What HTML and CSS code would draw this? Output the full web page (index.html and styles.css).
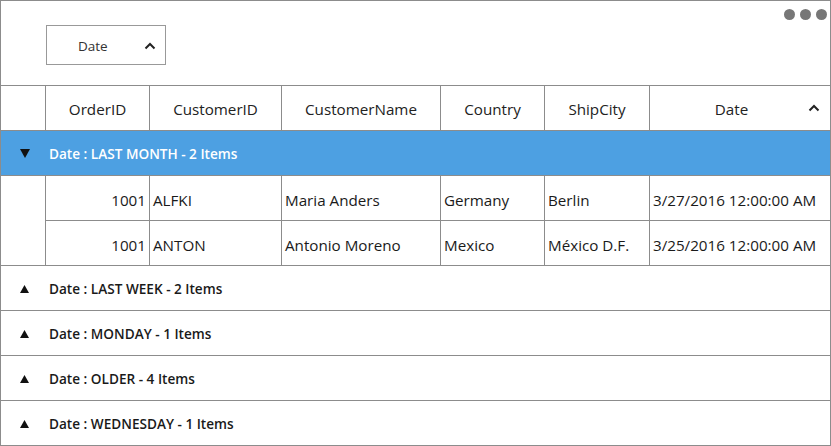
FILE: index.html
```html
<!DOCTYPE html>
<html>
<head>
<meta charset="utf-8">
<link rel="stylesheet" href="styles.css">
</head>
<body>
<div class="grid">
  <div class="toppanel">
    <div class="groupbtn">
      <span class="groupbtn-text">Date</span>
      <svg class="caret" width="12" height="8" viewBox="0 0 12 8"><polyline points="1.5,6.5 6,2 10.5,6.5" fill="none" stroke="#222" stroke-width="2"/></svg>
    </div>
    <div class="dots"><span class="dot"></span><span class="dot"></span><span class="dot"></span></div>
  </div>

  <div class="row header">
    <div class="cell indent"></div>
    <div class="cell hcell">OrderID</div>
    <div class="cell hcell">CustomerID</div>
    <div class="cell hcell">CustomerName</div>
    <div class="cell hcell">Country</div>
    <div class="cell hcell">ShipCity</div>
    <div class="cell hcell last datehead">
      <span>Date</span>
      <svg class="sortcaret" width="12" height="8" viewBox="0 0 12 8"><polyline points="1.5,6.5 6,2 10.5,6.5" fill="none" stroke="#222" stroke-width="2"/></svg>
    </div>
  </div>

  <div class="caption expanded">
    <svg class="tri" width="10" height="9" viewBox="0 0 10 9"><polygon points="0,0 10,0 5,9" fill="#111"/></svg>
    <span>Date : LAST MONTH - 2 Items</span>
  </div>

  <div class="groupbody">
    <div class="indentcol"></div>
    <div class="rows">
      <div class="row data">
        <div class="cell num">1001</div>
        <div class="cell">ALFKI</div>
        <div class="cell">Maria Anders</div>
        <div class="cell">Germany</div>
        <div class="cell">Berlin</div>
        <div class="cell last">3/27/2016 12:00:00 AM</div>
      </div>
      <div class="row data lastrow">
        <div class="cell num">1001</div>
        <div class="cell">ANTON</div>
        <div class="cell">Antonio Moreno</div>
        <div class="cell">Mexico</div>
        <div class="cell">México D.F.</div>
        <div class="cell last">3/25/2016 12:00:00 AM</div>
      </div>
    </div>
  </div>

  <div class="caption">
    <svg class="tri up" width="9" height="8" viewBox="0 0 9 8"><polygon points="4.5,0 9,8 0,8" fill="#111"/></svg>
    <span>Date : LAST WEEK - 2 Items</span>
  </div>
  <div class="caption">
    <svg class="tri up" width="9" height="8" viewBox="0 0 9 8"><polygon points="4.5,0 9,8 0,8" fill="#111"/></svg>
    <span>Date : MONDAY - 1 Items</span>
  </div>
  <div class="caption">
    <svg class="tri up" width="9" height="8" viewBox="0 0 9 8"><polygon points="4.5,0 9,8 0,8" fill="#111"/></svg>
    <span>Date : OLDER - 4 Items</span>
  </div>
  <div class="caption">
    <svg class="tri up" width="9" height="8" viewBox="0 0 9 8"><polygon points="4.5,0 9,8 0,8" fill="#111"/></svg>
    <span>Date : WEDNESDAY - 1 Items</span>
  </div>
</div>
</body>
</html>
```

FILE: styles.css
```css
* { box-sizing: border-box; }
html, body { margin: 0; padding: 0; background: #fff; }
body {
  font-family: "Open Sans", "Noto Sans", sans-serif;
  color: #1a1a1a;
}
.grid {
  width: 831px;
  height: 446px;
  border: 1px solid #8c8c8c;
  border-bottom: none;
  display: flex;
  flex-direction: column;
}
.toppanel {
  height: 85px;
  border-bottom: 1px solid #8c8c8c;
  display: flex;
  justify-content: space-between;
  align-items: flex-start;
}
.groupbtn {
  margin-top: 24px;
  margin-left: 45px;
  width: 120px;
  height: 40px;
  border: 1px solid #999;
  display: flex;
  align-items: center;
  padding-left: 31px;
  padding-right: 9px;
  padding-top: 1px;
  justify-content: space-between;
}
.groupbtn-text { font-size: 13.5px; color: #333; }
.dots {
  display: flex;
  gap: 5px;
  margin-top: 8px;
  margin-right: 3px;
}
.dot {
  width: 11px;
  height: 11px;
  border-radius: 50%;
  background: #777;
}
.row {
  display: grid;
  height: 45px;
  border-bottom: 1px solid #8c8c8c;
}
.header {
  grid-template-columns: 45px 104px 132px 159px 104px 105px 180px;
}
.cell {
  border-right: 1px solid #8c8c8c;
  display: flex;
  align-items: center;
  font-size: 15.2px;
  padding: 4px 3px 0 3px;
  white-space: nowrap;
}
.cell.last { border-right: none; }
.hcell { justify-content: center; color: #222; padding-top: 1px; }
.datehead { position: relative; padding-right: 20px; }
.sortcaret { position: absolute; right: 10px; top: 18px; }
.caption {
  height: 45px;
  border-bottom: 1px solid #8c8c8c;
  display: flex;
  align-items: center;
  font-size: 13.6px;
  font-weight: 600;
  color: #1a1a1a;
  padding-top: 1px;
}
.caption .tri { margin-left: 19px; margin-right: 19px; }
.caption .tri.up { margin-left: 19px; margin-right: 20px; }
.caption.expanded {
  background: #4da0e2;
  color: #fff;
}
.groupbody {
  display: flex;
  border-bottom: 1px solid #8c8c8c;
}
.indentcol {
  width: 45px;
  border-right: 1px solid #8c8c8c;
}
.rows { flex: 1; display: flex; flex-direction: column; }
.row.data {
  grid-template-columns: 104px 132px 159px 104px 105px 180px;
}
.row.data.lastrow { border-bottom: none; height: 44px; }
.num { justify-content: flex-end; }
```
